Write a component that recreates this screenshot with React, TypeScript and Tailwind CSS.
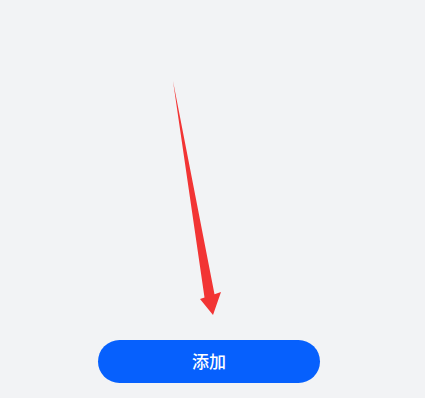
export default function App() {
  return (
    <div className="relative h-[398px] w-full overflow-hidden bg-[#f2f3f5]" style={{ fontFamily: '"Noto Sans", "Noto Sans CJK SC", sans-serif' }}>
      {/* annotation arrow */}
      <svg className="absolute left-0 top-0" width="425" height="398" viewBox="0 0 425 398">
        <polygon
          points="173,81 214.5,294.2 221,292 213,315 200,299 204.5,297.5"
          fill="#f23434"
        />
      </svg>

      <div className="flex pt-[340px] pl-[98px]">
        <button className="flex h-[43px] w-[222px] items-center justify-center rounded-full bg-[#0660fd] text-[17px] font-medium text-white">
          添加
        </button>
      </div>
    </div>
  )
}
